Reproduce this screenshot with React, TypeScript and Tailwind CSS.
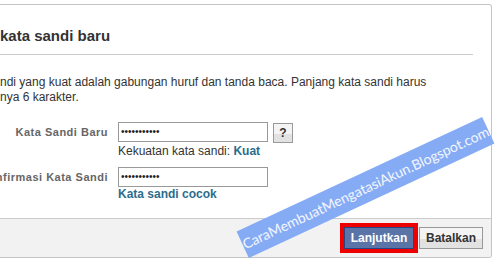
const dots = "•••••••••••";

const PasswordBox = () => (
  <div className="flex h-[20px] w-[150px] items-center border border-[#999] bg-white pl-[2px] text-[10px] leading-none text-[#222]">
    {dots}
  </div>
);

export default function App() {
  return (
    <div className="relative h-[261px] w-[497px] overflow-hidden bg-white font-['Liberation_Sans',Arial,sans-serif] text-[#333]">
      <div className="mt-[4px] flex h-[254px] w-[492px] flex-col overflow-hidden rounded-r-[3px] border border-l-0 border-[#c4c4c4]">
        <div className="mr-[18px] border-b border-[#ccc] pb-[8px] pt-[21px]">
          <h2 className="whitespace-nowrap text-[15px] font-bold leading-[20px] text-[#333]">kata sandi baru</h2>
        </div>

        <p className="mt-[20px] text-[12px] leading-[15px] text-[#333]">
          ndi yang kuat adalah gabungan huruf dan tanda baca. Panjang kata sandi harus
          <br />
          nya 6 karakter.
        </p>

        <div className="mt-[17px] grid grid-cols-[108px_auto] gap-x-[10px]">
          <label className="flex h-[20px] items-center justify-end whitespace-nowrap text-[11px] font-bold tracking-[0.5px] text-[#666]">
            Kata Sandi Baru
          </label>
          <div>
            <div className="flex items-start gap-[5px]">
              <PasswordBox />
              <button className="mt-[1px] flex h-[20px] w-[20px] items-center justify-center border border-[#999] bg-[linear-gradient(#f4f4f4_55%,#e2e2e2_55%)] text-[12px] font-bold text-[#333]">
                ?
              </button>
            </div>
            <div className="mt-[1px] text-[12px] leading-[15px] text-[#333]">
              Kekuatan kata sandi: <span className="font-bold text-[#2b6d8c]">Kuat</span>
            </div>
          </div>

          <label className="mt-[8px] flex h-[20px] items-center justify-end whitespace-nowrap text-[11px] font-bold tracking-[0.5px] text-[#666]">
            nfirmasi Kata Sandi
          </label>
          <div className="mt-[8px]">
            <PasswordBox />
            <div className="text-[12px] font-bold leading-[15px] text-[#2b6d8c]">Kata sandi cocok</div>
          </div>
        </div>

        <div className="mt-auto flex h-[39px] items-center justify-end gap-[1px] border-t border-[#ccc] bg-[#f2f2f2] pr-[8px]">
          <div className="border-[4px] border-[#ee0000]">
            <button className="flex h-[22px] w-[70px] items-center justify-center border border-[#29447e] bg-[#5b74a8] text-[12px] font-bold text-white">
              Lanjutkan
            </button>
          </div>
          <button className="flex h-[22px] w-[64px] items-center justify-center border border-[#999] bg-[linear-gradient(#f4f4f4_55%,#e2e2e2_55%)] text-[12px] font-bold text-[#333]">
            Batalkan
          </button>
        </div>
      </div>

      <div className="absolute left-[230px] top-[173px] flex h-[29px] w-[271px] -rotate-[25deg] items-center justify-center whitespace-nowrap bg-[#86abf5] font-['Lato',sans-serif] text-[14px] text-white/90">
        CaraMembuatMengatasiAkun.Blogspot.com
      </div>
    </div>
  );
}
